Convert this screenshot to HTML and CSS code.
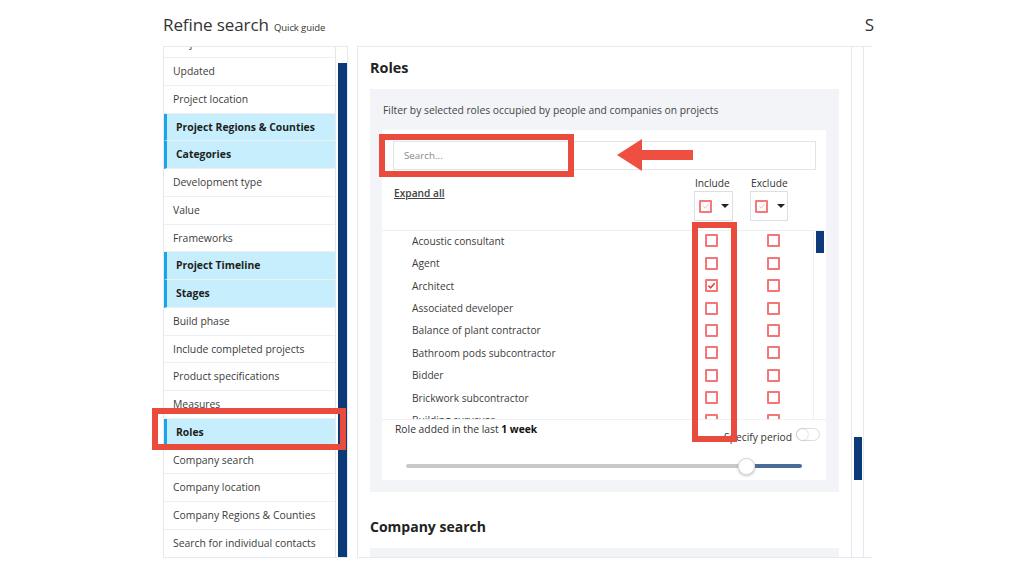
FILE: index.html
```html
<!DOCTYPE html>
<html>
<head>
<meta charset="utf-8">
<link rel="stylesheet" href="styles.css">
</head>
<body>
<div class="shot">
  <div class="head">
    <div class="title">Refine search <span class="guide">Quick guide</span></div>
    <div class="title2">S</div>
  </div>
  <div class="cols">
    <div class="side">
      <div class="side-list">
        <ul class="nav">
          <li>Project search</li>
          <li>Updated</li>
          <li>Project location</li>
          <li class="on">Project Regions &amp; Counties</li>
          <li class="on">Categories</li>
          <li>Development type</li>
          <li>Value</li>
          <li>Frameworks</li>
          <li class="on">Project Timeline</li>
          <li class="on">Stages</li>
          <li>Build phase</li>
          <li>Include completed projects</li>
          <li>Product specifications</li>
          <li>Measures</li>
          <li class="on">Roles</li>
          <li>Company search</li>
          <li>Company location</li>
          <li>Company Regions &amp; Counties</li>
          <li>Search for individual contacts</li>
        </ul>
      </div>
      <div class="side-scroll"><div class="thumb"></div></div>
    </div>
    <div class="main">
      <div class="main-content">
        <h2 class="sec">Roles</h2>
        <div class="greybox">
          <p class="desc">Filter by selected roles occupied by people and companies on projects</p>
          <div class="whitebox">
            <div class="search-row"><div class="search">Search...</div></div>
            <div class="controls">
              <div class="expand">Expand all</div>
              <div class="ccol inc">
                <div class="clabel">Include</div>
                <div class="dd"><span class="cb ghost"><svg viewBox="0 0 10 10" width="8" height="8"><path d="M1.5 5.2 L4 7.5 L8.5 2.5" fill="none" stroke="#f8c8c8" stroke-width="1.4"/></svg></span><span class="caret"></span></div>
              </div>
              <div class="ccol exc">
                <div class="clabel">Exclude</div>
                <div class="dd"><span class="cb ghost"><svg viewBox="0 0 10 10" width="8" height="8"><path d="M1.5 5.2 L4 7.5 L8.5 2.5" fill="none" stroke="#f8c8c8" stroke-width="1.4"/></svg></span><span class="caret"></span></div>
              </div>
            </div>
            <div class="listwrap">
              <div class="list">
                <div class="row"><span class="lbl">Acoustic consultant</span><span class="cb"></span><span class="cb ex"></span></div>
                <div class="row"><span class="lbl">Agent</span><span class="cb"></span><span class="cb ex"></span></div>
                <div class="row"><span class="lbl">Architect</span><span class="cb checked"><svg viewBox="0 0 10 10" width="9" height="9"><path d="M1.5 5.2 L4 7.5 L8.5 2.5" fill="none" stroke="#e8413c" stroke-width="1.8"/></svg></span><span class="cb ex"></span></div>
                <div class="row"><span class="lbl">Associated developer</span><span class="cb"></span><span class="cb ex"></span></div>
                <div class="row"><span class="lbl">Balance of plant contractor</span><span class="cb"></span><span class="cb ex"></span></div>
                <div class="row"><span class="lbl">Bathroom pods subcontractor</span><span class="cb"></span><span class="cb ex"></span></div>
                <div class="row"><span class="lbl">Bidder</span><span class="cb"></span><span class="cb ex"></span></div>
                <div class="row"><span class="lbl">Brickwork subcontractor</span><span class="cb"></span><span class="cb ex"></span></div>
                <div class="row"><span class="lbl">Building surveyor</span><span class="cb"></span><span class="cb ex"></span></div>
              </div>
              <div class="lscroll"><div class="lthumb"></div></div>
            </div>
            <div class="period">
              <div class="added">Role added in the last <b>1 week</b></div>
              <div class="spec">Specify period <span class="toggle"></span></div>
            </div>
            <div class="slider">
              <div class="track-a"></div>
              <div class="knob"></div>
              <div class="track-b"></div>
            </div>
          </div>
        </div>
        <h2 class="sec sec2">Company search</h2>
        <div class="greybox stub"></div>
      </div>
      <div class="main-scroll"><div class="mthumb"></div></div>
      <div class="rightcol"></div>
    </div>
  </div>

  <div class="anno anno-search"></div>
  <div class="anno anno-roles"></div>
  <div class="anno anno-include"></div>
  <svg class="arrow" width="80" height="40" viewBox="0 0 80 40">
    <polygon points="0,17 25,1 25,12 76,12 76,22 25,22 25,33" fill="#ee4f40"/>
  </svg>
</div>
</body>
</html>
```

FILE: styles.css
```css
* { box-sizing: border-box; }
html, body { margin: 0; padding: 0; background: #fff; }
body {
  width: 1024px;
  height: 576px;
  overflow: hidden;
  font-family: "Open Sans", "Noto Sans", sans-serif;
  color: #3c3c3c;
}
.shot {
  position: relative;
  width: 1024px;
  height: 576px;
  padding-left: 163px;
}
.head {
  width: 711px;
  height: 46px;
  padding-top: 13px;
  display: flex;
  justify-content: space-between;
  align-items: baseline;
  overflow: hidden;
}
.title { font-size: 17px; color: #333; letter-spacing: -0.1px; }
.guide { font-size: 9.5px; color: #333; margin-left: 1px; }
.title2 { font-size: 17px; color: #333; }

.cols {
  display: flex;
  height: 512px;
  width: 711px;
  overflow: hidden;
}

/* sidebar */
.side {
  display: flex;
  width: 185px;
  border-top: 1px solid #e6e9ee;
  border-bottom: 1px solid #e6e9ee;
}
.side-list {
  width: 173px;
  border-left: 1px solid #e4e7ec;
  border-right: 1px solid #e4e7ec;
  overflow: hidden;
}
.nav {
  list-style: none;
  margin: -16.6px 0 0 0;
  padding: 0;
}
.nav li {
  height: 27.76px;
  line-height: 26.76px;
  border-bottom: 1px solid #eceff3;
  padding-left: 9px;
  font-size: 10.4px;
  color: #3c3c3c;
  white-space: nowrap;
}
.nav li.on {
  background: #c6eefc;
  border-left: 3px solid #1aa5e8;
  padding-left: 9px;
  font-weight: 700;
  color: #1e1e1e;
}
.side-scroll {
  width: 12px;
  padding: 16px 1px 0 2px;
  border-right: 1px solid #e4e7ec;
}
.thumb { width: 9px; height: 100%; background: #0c3a78; }

/* main */
.main {
  display: flex;
  margin-left: 9px;
  border-top: 1px solid #e6e9ee;
  border-bottom: 1px solid #e6e9ee;
}
.main-content {
  width: 495px;
  border-left: 1px solid #e6e9ee;
  border-right: 1px solid #e6e9ee;
  padding: 11px 12px 0 12px;
  overflow: hidden;
}
.sec {
  margin: 0 0 11px 0;
  font-size: 14.4px;
  line-height: 20px;
  font-weight: 700;
  color: #222;
}
.sec2 { margin-top: 25px; font-size: 14px; }
.greybox {
  background: #f2f4f8;
  padding: 14px 13px 12px 12px;
}
.greybox.stub { height: 40px; }
.desc {
  margin: 0 0 13px 1px;
  font-size: 10.3px;
  line-height: 14px;
  color: #444;
}
.whitebox {
  background: #fff;
  height: 350px;
  display: flex;
  flex-direction: column;
}
.search-row { padding: 11px 10px 0 11px; }
.search {
  height: 29px;
  border: 1px solid #e1e4e9;
  padding-left: 10px;
  font-size: 9.8px;
  line-height: 27px;
  color: #8a8a8a;
}
.controls {
  display: flex;
  flex: none;
  height: 61px;
  padding-top: 6px;
  border-bottom: 1px solid #eceff3;
}
.expand {
  flex: 1;
  padding-left: 12px;
  margin-top: 10px;
  font-size: 10.2px;
  line-height: 14px;
  font-weight: 600;
  color: #444;
  text-decoration: underline;
}
.ccol { display: flex; flex-direction: column; }
.ccol.inc { width: 39px; margin-right: 17px; }
.ccol.exc { width: 38px; margin-right: 38px; }
.clabel {
  font-size: 10.2px;
  line-height: 15px;
  color: #333;
  padding-left: 1px;
}
.dd {
  height: 30px;
  border: 1px solid #dcdfe4;
  display: flex;
  align-items: center;
  padding-left: 4px;
}
.caret {
  width: 0; height: 0;
  margin-left: 9px;
  border-left: 4px solid transparent;
  border-right: 4px solid transparent;
  border-top: 4px solid #222;
}
.cb {
  width: 13px;
  height: 13px;
  border: 2px solid #f37777;
  border-radius: 1px;
  background: #fff;
  display: flex;
  align-items: center;
  justify-content: center;
  flex: none;
}
.cb.ghost { border-color: #f27a7a; }

.listwrap {
  display: flex;
  flex: none;
  height: 189px;
  border-bottom: 1px solid #eef0f4;
}
.list {
  width: 433px;
  border-right: 1px solid #eceff3;
  overflow: hidden;
}
.row {
  display: flex;
  align-items: center;
  height: 22.45px;
}
.row:first-child { margin-top: -1.5px; }
.lbl {
  width: 323px;
  padding-left: 30px;
  font-size: 10.2px;
  color: #3c3c3c;
  white-space: nowrap;
}
.cb.ex { margin-left: 49px; }
.lscroll { width: 12px; padding: 0 1px 0 2px; }
.lthumb { width: 8px; height: 22px; background: #0c3a78; }

.period {
  display: flex;
  flex: none;
  justify-content: space-between;
  height: 26px;
  padding: 2px 6px 2px 13px;
}
.added { font-size: 10.3px; line-height: 14px; color: #333; }
.added b { font-weight: 700; color: #111; }
.spec {
  align-self: flex-end;
  display: flex;
  align-items: center;
  font-size: 10.3px;
  color: #333;
}
.toggle {
  width: 24px;
  height: 13px;
  margin-left: 4px;
  border: 1px solid #dcdcdc;
  border-radius: 7px;
  background: #fff;
  position: relative;
  top: -3px;
}
.toggle::before {
  content: "";
  display: block;
  width: 11px; height: 11px;
  border-radius: 50%;
  background: #fff;
  box-shadow: 0 0 2px rgba(0,0,0,0.3);
}
.slider {
  display: flex;
  align-items: center;
  padding: 6px 24px 0 24px;
  height: 39px;
}
.track-a { flex: 1; height: 4px; background: #c9c9c9; border-radius: 2px 0 0 2px; }
.track-b { width: 47px; height: 4px; background: #4a6c9b; border-radius: 0 2px 2px 0; }
.knob {
  width: 17px;
  height: 17px;
  border-radius: 50%;
  background: #fff;
  border: 1px solid #d6d6d6;
  box-shadow: 0 1px 3px rgba(0,0,0,0.25);
  flex: none;
}

.main-scroll {
  width: 12px;
  padding: 390px 1px 0 2px;
  border-right: 1px solid #e6e9ee;
}
.mthumb { width: 8px; height: 43px; background: #0c3a78; }
.rightcol { width: 8px; }

/* annotations (overlays) */
.anno {
  position: absolute;
  border: 6px solid #e94b3c;
}
.anno-search { left: 379px; top: 134px; width: 195px; height: 43px; }
.anno-roles { left: 152px; top: 408px; width: 194px; height: 42px; }
.anno-include { left: 692px; top: 222px; width: 45px; height: 220px; }
.arrow { position: absolute; left: 617px; top: 138px; }
```
